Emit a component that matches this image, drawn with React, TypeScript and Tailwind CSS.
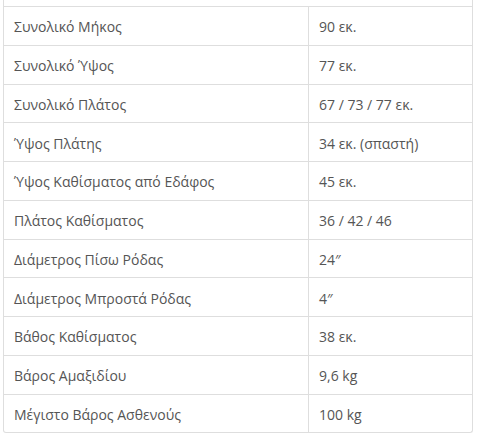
const specs = [
  ['Συνολικό Μήκος', '90 εκ.'],
  ['Συνολικό Ύψος', '77 εκ.'],
  ['Συνολικό Πλάτος', '67 / 73 / 77 εκ.'],
  ['Ύψος Πλάτης', '34 εκ. (σπαστή)'],
  ['Ύψος Καθίσματος από Εδάφος', '45 εκ.'],
  ['Πλάτος Καθίσματος', '36 / 42 / 46'],
  ['Διάμετρος Πίσω Ρόδας', '24″'],
  ['Διάμετρος Μπροστά Ρόδας', '4″'],
  ['Βάθος Καθίσματος', '38 εκ.'],
  ['Βάρος Αμαξιδίου', '9,6 kg'],
  ['Μέγιστο Βάρος Ασθενούς', '100 kg'],
];

export default function App() {
  return (
    <div className="w-[479px] h-[440px] bg-white overflow-hidden font-['Open_Sans',sans-serif] text-[14px] text-[#555]">
      <div className="ml-[3px] w-[470px] border-x border-b border-[#dedede] rounded-b-[3px]">
        <div className="h-[6px]" />
        {specs.map(([label, value]) => (
          <div key={label} className="flex h-[38.75px] border-t border-[#dedede]">
            <div className="w-[305px] flex items-center pl-[10px] pr-[10px] pt-[2px] border-r border-[#dedede]">{label}</div>
            <div className="flex-1 flex items-center pl-[10px] pr-[10px] pt-[2px]">{value}</div>
          </div>
        ))}
      </div>
    </div>
  );
}
